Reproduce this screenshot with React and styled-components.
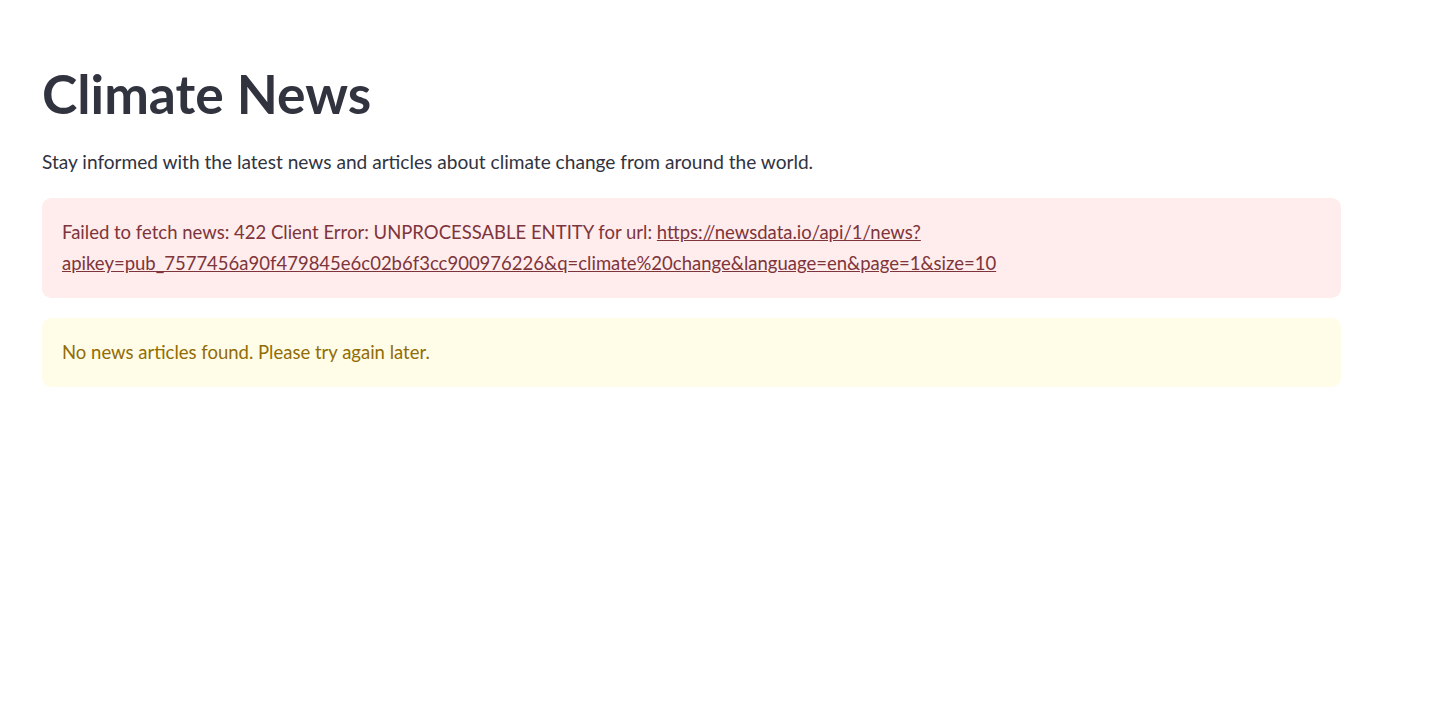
import styled, { createGlobalStyle } from "styled-components"

const colors = {
  text: `#31333f`,
  errorBg: `#ffecec`,
  errorText: `#7d353b`,
  warnBg: `#fffce7`,
  warnText: `#926c05`
}

const GlobalStyle = createGlobalStyle`
  body {
    margin: 0;
    background: #ffffff;
    font-family: Lato, "Noto Sans", sans-serif;
    color: ${colors.text};
  }
`

const Page = styled.main`
  display: flex;
  flex-direction: column;
  padding: 62px 100px 0 42px;
`

const Title = styled.h1`
  margin: 0;
  font-size: 53.4px;
  line-height: 63.4px;
  font-weight: 700;
  color: ${colors.text};
`

const Lead = styled.p`
  margin: 22px 0 20px;
  font-size: 19.1px;
  line-height: 30.7px;
`

const Alerts = styled.div`
  display: flex;
  flex-direction: column;
  gap: 20px;
`

const Alert = styled.div`
  padding: 19.2px 20px;
  border-radius: 9.6px;
  font-size: 18.5px;
  line-height: 30.7px;
  background: ${p => p.$kind === 'error' ? colors.errorBg : colors.warnBg};
  color: ${p => p.$kind === 'error' ? colors.errorText : colors.warnText};
`

const Link = styled.a`
  color: inherit;
  text-decoration: underline;
`

function App() {
  return (
    <>
      <GlobalStyle />
      <Page>
        <Title>Climate News</Title>
        <Lead>Stay informed with the latest news and articles about climate change from around the world.</Lead>
        <Alerts>
          <Alert $kind="error">
            Failed to fetch news: 422 Client Error: UNPROCESSABLE ENTITY for url:{' '}
            <Link href="#">
              https://newsdata.io/api/1/news?<wbr />apikey=pub_7577456a90f479845e6c02b6f3cc900976226&amp;q=climate%20change&amp;language=en&amp;page=1&amp;size=10
            </Link>
          </Alert>
          <Alert $kind="warning">No news articles found. Please try again later.</Alert>
        </Alerts>
      </Page>
    </>
  )
}

export default App
